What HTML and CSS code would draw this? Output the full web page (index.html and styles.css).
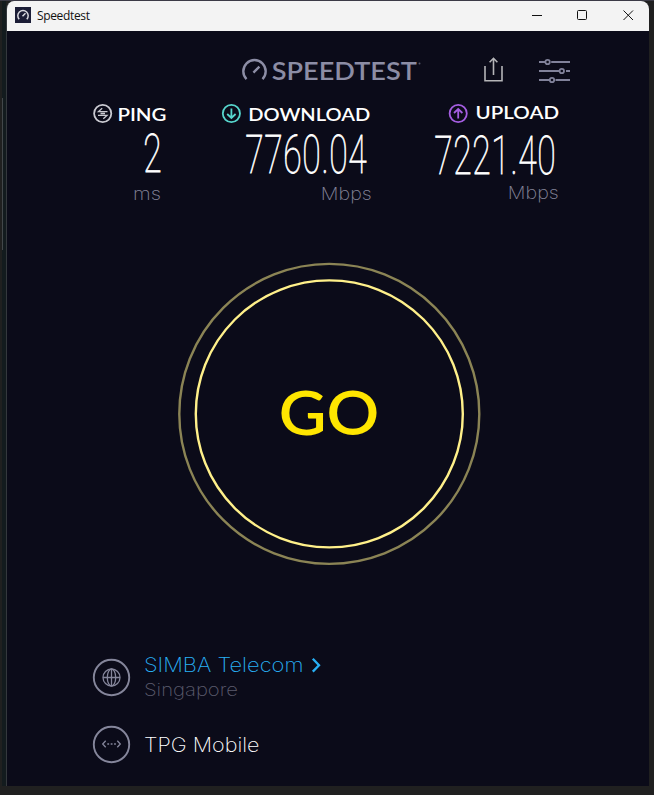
FILE: index.html
```
<!DOCTYPE html>
<html lang="en">
<head>
  <meta charset="UTF-8" />
  <meta name="viewport" content="width=device-width, initial-scale=1.0" />
  <title>Speedtest</title>
  <link rel="stylesheet" href="styles.css">
</head>
<body>
  <div class="window">
    <div class="titlebar">
      <svg class="app-icon" width="16" height="16" viewBox="0 0 16 16">
        <rect width="16" height="16" fill="#1b1d36" />
        <path d="M4.2 12.2A5.2 5.2 0 1 1 11.8 12.2M7.5 9.2L10.5 6.2" fill="none" stroke="#d8d8df" stroke-width="1.5" />
      </svg>
      <span class="title">Speedtest</span>
      <svg class="controls" width="104" height="16" viewBox="0 0 104 16">
        <path d="M2 8.5H12M93.5 3.5L103 13M103 3.5L93.5 13" />
        <rect x="47.5" y="3.5" width="9" height="9" rx="1" />
      </svg>
    </div>

    <header class="header">
      <svg class="logo" width="180" height="26" viewBox="0 0 180 26">
        <path d="M4.5 21.1A11.2 11.2 0 1 1 20.5 21.1M11.4 14.6L17.4 8.7" />
        <text x="29.8" y="21.5" textLength="145" lengthAdjust="spacingAndGlyphs">SPEEDTEST</text>
        <circle cx="177.5" cy="5.5" r="1" />
      </svg>
      <svg class="share" width="20" height="26" viewBox="0 0 20 26">
        <path d="M1 8V22.7H18V8M9.5 17V1M5.6 4.2L9.5 .3L13.4 4.2" />
      </svg>
      <svg class="settings" width="32" height="26" viewBox="0 0 32 26">
        <path d="M0 4H6M12.2 4H31M0 13H20M27 13H31M0 22H10.3M16.5 22H31" />
        <circle cx="8.6" cy="4" r="2.2" />
        <circle cx="22.8" cy="13" r="2.2" />
        <circle cx="13" cy="22" r="2.2" />
      </svg>
    </header>

    <section class="results">
      <div class="result ping">
        <svg class="label" width="74" height="22" viewBox="0 0 74 22">
          <circle cx="9.7" cy="10.5" r="8.6" />
          <path class="arrows" d="M14.5 8.6H5.5L9.2 5.2M5 12.4H14L10.3 15.8M7.5 10.5H12" />
          <text x="24.4" y="17.6" textLength="49" lengthAdjust="spacingAndGlyphs">PING</text>
        </svg>
        <svg class="number" width="74" height="52" viewBox="0 0 74 52">
          <text transform="translate(50.3 47.4) scale(.63 1)">2</text>
        </svg>
        <svg class="unit" width="74" height="26" viewBox="0 0 74 26">
          <text x="40" y="22.7" textLength="28" lengthAdjust="spacingAndGlyphs">ms</text>
        </svg>
      </div>
      <div class="result download">
        <svg class="label" width="150" height="22" viewBox="0 0 150 22">
          <circle cx="10.4" cy="10.5" r="8.6" />
          <path d="M10.4 5.5V15M6.2 11L10.4 15L14.6 11" />
          <text x="27.3" y="17.6" textLength="122" lengthAdjust="spacingAndGlyphs">DOWNLOAD</text>
        </svg>
        <svg class="number" width="150" height="52" viewBox="0 0 150 52">
          <text transform="translate(24.2 48.1) scale(.63 1)" textLength="193" lengthAdjust="spacing">7760.04</text>
        </svg>
        <svg class="unit" width="150" height="26" viewBox="0 0 150 26">
          <text x="99.8" y="22.7" textLength="51" lengthAdjust="spacingAndGlyphs">Mbps</text>
        </svg>
      </div>
      <div class="result upload">
        <svg class="label" width="124" height="22" viewBox="0 0 124 22">
          <circle cx="23.2" cy="10.5" r="8.6" />
          <path d="M23.2 15.5V6M19 10L23.2 6L27.4 10" />
          <text x="40.6" y="16.4" textLength="83.5" lengthAdjust="spacingAndGlyphs">UPLOAD</text>
        </svg>
        <svg class="number" width="124" height="52" viewBox="0 0 124 52">
          <text transform="translate(-.8 49.3) scale(.63 1)" textLength="193" lengthAdjust="spacing">7221.40</text>
        </svg>
        <svg class="unit" width="124" height="26" viewBox="0 0 124 26">
          <text x="72.8" y="22.2" textLength="51" lengthAdjust="spacingAndGlyphs">Mbps</text>
        </svg>
      </div>
    </section>

    <main class="start">
      <svg class="go" width="304" height="304" viewBox="0 0 304 304">
        <circle class="outer" cx="152.3" cy="151.9" r="150" />
        <circle class="inner" cx="152.3" cy="151.9" r="133.5" />
        <text x="101.8" y="173.1" textLength="100.5" lengthAdjust="spacingAndGlyphs">GO</text>
      </svg>
    </main>

    <footer class="connection">
      <div class="row">
        <svg class="badge" width="38" height="38" viewBox="0 0 38 38">
          <circle class="ring" cx="18.5" cy="18.5" r="17.7" />
          <g class="glyph">
            <circle cx="18.5" cy="18.5" r="8.5" />
            <ellipse cx="18.5" cy="18.5" rx="4.2" ry="8.5" />
            <path d="M18.5 10V27M10 18.5H27" />
          </g>
        </svg>
        <svg class="server" width="180" height="46" viewBox="0 0 180 46">
          <text class="name" x="0" y="17.5" textLength="159.5" lengthAdjust="spacingAndGlyphs">SIMBA Telecom</text>
          <path d="M168.8 4.8L175 11.2L168.8 17.6" />
          <text class="city" x="0" y="42" textLength="94" lengthAdjust="spacingAndGlyphs">Singapore</text>
        </svg>
      </div>
      <div class="row">
        <svg class="badge" width="38" height="38" viewBox="0 0 38 38">
          <circle class="ring" cx="18.5" cy="18.5" r="17.7" />
          <path class="glyph" d="M12.7 14.7L9.7 18L12.7 21.3M24.3 14.7L27.3 18L24.3 21.3M14.3 18H16.1M17.7 18H19.5M21.1 18H22.9" />
        </svg>
        <svg class="provider" width="180" height="38" viewBox="0 0 180 38">
          <text x="0" y="25.5" textLength="115.5" lengthAdjust="spacingAndGlyphs">TPG Mobile</text>
        </svg>
      </div>
    </footer>
  </div>
</body>
</html>
```
FILE: styles.css
```
body {
  margin: 0;
  height: 795px;
  box-sizing: border-box;
  padding: 1px 5px 9px 6px;
  background: linear-gradient(#3b3a46 0 1px, transparent 1px),
    linear-gradient(#42474a, #42474a) 2px 98px / 1px 152px no-repeat,
    linear-gradient(#202020, #202020) 0 786px / 100% 9px no-repeat,
    linear-gradient(90deg, #202020 0 2px, #131b1e 2px 6px, #202020 6px);
  font-family: Inter, 'Open Sans', sans-serif;
  overflow: hidden;
}
svg {
  display: block;
  flex: none;
  overflow: visible;
}
.window {
  height: 785px;
  box-sizing: border-box;
  border-left: 1px solid #34383d;
  border-radius: 8px 8px 0 0;
  background: #0b0b19;
  overflow: hidden;
}
.titlebar {
  display: flex;
  align-items: center;
  height: 30px;
  box-sizing: border-box;
  padding: 0 15px 2px 8px;
  background: #f3f3f3;
}
.title {
  margin-left: 6px;
  font: 12px 'Open Sans', sans-serif;
  letter-spacing: -0.35px;
  color: #111;
}
.controls {
  margin-left: auto;
  fill: none;
  stroke: #111;
  stroke-width: 1;
}

/* logo and toolbar */
.header {
  display: flex;
  height: 72px;
  box-sizing: border-box;
  padding: 27px 0 0 235px;
}
.logo path {
  fill: none;
  stroke: #8c8da5;
  stroke-width: 2.4;
}
.logo text {
  font-family: Lato, sans-serif;
  font-size: 24.5px;
  font-weight: 600;
  fill: #8c8da5;
}
.logo circle {
  fill: #55566b;
}
.share {
  margin-left: 62px;
  fill: none;
  stroke: #b5b5b8;
  stroke-width: 1.6;
}
.settings {
  margin-left: 35px;
  fill: none;
  stroke: #81829a;
  stroke-width: 1.8;
}

/* results */
.results {
  display: flex;
  height: 130px;
  padding-left: 86px;
}
.download {
  margin-left: 54px;
}
.upload {
  margin-left: 64px;
}
.label {
  fill: none;
  stroke: #c9c9d0;
  stroke-width: 1.8;
}
.arrows {
  stroke-width: 1.3;
}
.download .label {
  stroke: #56d5cc;
}
.upload .label {
  stroke: #a45de0;
}
.label text {
  font-family: Lato, sans-serif;
  font-size: 17.6px;
  font-weight: 600;
  fill: #fff;
  stroke: none;
}
.number text {
  font-family: Roboto, sans-serif;
  font-size: 53.5px;
  font-weight: 100;
  fill: #fff;
  stroke: #fff;
  stroke-width: 0.8;
}
.unit text {
  font-size: 17.8px;
  font-weight: 200;
  fill: #85859a;
}

/* go button */
.start {
  height: 421px;
  padding: 29px 0 0 170px;
  box-sizing: border-box;
}
.go circle {
  fill: none;
  stroke-width: 2.4;
}
.go .outer {
  stroke: #8b8455;
}
.go .inner {
  stroke: #fff08a;
}
.go text {
  font-family: Lato, sans-serif;
  font-size: 61px;
  font-weight: 600;
  fill: #ffe600;
}

/* server and provider */
.connection {
  padding-left: 86px;
}
.row {
  display: flex;
  height: 67px;
  align-items: flex-start;
}
.badge {
  margin-top: 5px;
  fill: none;
}
.ring {
  stroke: #85869b;
  stroke-width: 1.9;
}
.glyph {
  stroke: #85869b;
  stroke-width: 1.3;
}
.server,
.provider {
  margin-left: 13px;
  font-weight: 250;
}
.provider {
  margin-top: 5px;
}
.server path {
  fill: none;
  stroke: #28b0f5;
  stroke-width: 2.3;
}
.name {
  font-size: 20px;
  fill: #28b0f5;
}
.city {
  font-size: 17.5px;
  fill: #5b5b6d;
}
.provider text {
  font-size: 20px;
  fill: #fff;
}
```
